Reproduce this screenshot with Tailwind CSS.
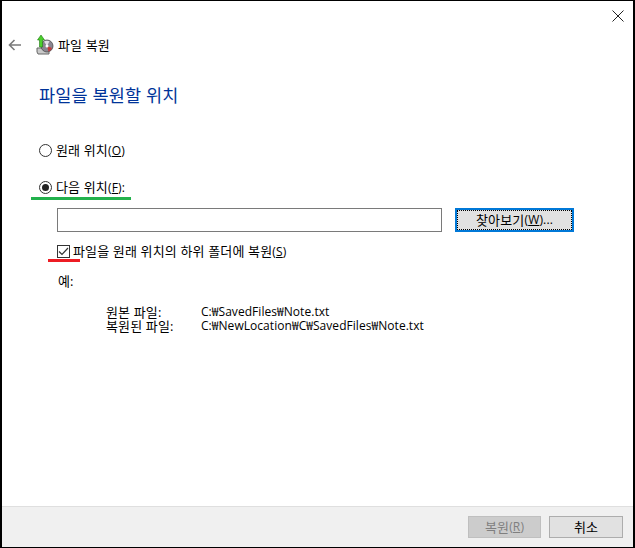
<!DOCTYPE html>
<html lang="ko">
<head>
    <meta charset="UTF-8">
    <title>파일 복원</title>
    <script src="https://cdn.jsdelivr.net/npm/@tailwindcss/browser@4"></script>
</head>
<body class="bg-white">
    <div class="relative w-[635px] h-[548px] flex flex-col border-t border-b border-l-2 border-r-2 border-t-black border-b-black border-l-black border-r-black bg-white text-[13px] leading-[14px] tracking-[0.15px] text-black font-['Open_Sans','Noto_Sans_CJK_KR',sans-serif] overflow-hidden">

        <!-- Close -->
        <div class="flex justify-end h-[29px] pt-[9px] pr-[9px]">
            <svg width="12" height="12" viewBox="0 0 12 12" fill="none" stroke="#222" stroke-width="1"><path d="M0.5 0.5 11.5 11.5M11.5 0.5 0.5 11.5"/></svg>
        </div>

        <!-- Title row -->
        <div class="flex items-center h-[30px] pl-[6px]">
            <svg width="14" height="12" viewBox="0 0 14 12" fill="none" stroke="#7a7a7a" stroke-width="1.6"><path d="M13 6H1.5M6.5 1 1.5 6l5 5"/></svg>
            <svg class="ml-[14px]" width="18" height="20" viewBox="0 0 18 20">
                <path d="M1 13h10l2 4v2H2l-1-2z" fill="#c9c9c9" stroke="#666" stroke-width="1"/>
                <circle cx="11" cy="11" r="6" fill="#8a8590" stroke="#4a4a4a" stroke-width="0.8"/>
                <path d="M11 11 8 6.5a6 6 0 0 1 5.5-.2z" fill="#e2dfe6"/>
                <path d="M11 11l5 2a6 6 0 0 1-3.4 3.8z" fill="#c23b3b"/>
                <circle cx="11" cy="11" r="1.5" fill="#fff"/>
                <path d="M5 0 1.5 5H3.5V12H6.5V5H8.5z" fill="#4ccf2c" stroke="#1d7a10" stroke-width="0.6"/>
            </svg>
            <span class="ml-[4px]">파일 복원</span>
        </div>

        <!-- Heading -->
        <h1 class="mt-[24px] ml-[37px] text-[17.5px] leading-[22px] font-normal text-[#003399]">파일을 복원할 위치</h1>

        <!-- Options -->
        <div class="mt-[36px] ml-[37px] flex items-center h-[16px]">
            <span class="w-[13px] h-[13px] rounded-full border border-[#333] bg-white"></span>
            <span class="ml-[4px]">원래 위치<span class="text-[12px]">(<u>O</u>)</span></span>
        </div>
        <div class="mt-[21px] ml-[37px] flex items-center h-[16px]">
            <span class="w-[13px] h-[13px] rounded-full border border-[#333] bg-white flex items-center justify-center">
                <span class="w-[7px] h-[7px] rounded-full bg-[#222]"></span>
            </span>
            <span class="ml-[4px]">다음 위치<span class="text-[12px]">(<u>F</u>):</span></span>
        </div>

        <!-- Path input + browse -->
        <div class="mt-[13px] ml-[55px] flex items-stretch h-[24px]">
            <div class="w-[385px] border border-[#7a7a7a] bg-white"></div>
            <div class="ml-[13px] w-[119px] border-[2px] border-[#0078d7] bg-[#e1e1e1]">
                <div class="h-full border border-dotted border-black flex items-center justify-center">찾아보기<span class="text-[12px]">(<u>W</u>)...</span></div>
            </div>
        </div>

        <!-- Subfolder checkbox -->
        <div class="mt-[11px] ml-[55px] flex items-center h-[16px]">
            <span class="w-[13px] h-[13px] border border-[#333] bg-white flex items-center justify-center">
                <svg width="11" height="9" viewBox="0 0 11 9" fill="none" stroke="#333" stroke-width="1.2"><path d="M1 4.5 4 7.5 10 1"/></svg>
            </span>
            <span class="ml-[3px]">파일을 원래 위치의 하위 폴더에 복원<span class="text-[12px]">(<u>S</u>)</span></span>
        </div>

        <!-- Example -->
        <div class="mt-[14px] ml-[56px] h-[16px] flex items-center">예:</div>
        <div class="mt-[16px] ml-[104px] grid grid-cols-[95px_1fr] leading-[14px]">
            <span>원본 파일:</span><span class="text-[12px] tracking-[0.05px]">C:₩SavedFiles₩Note.txt</span>
            <span>복원된 파일:</span><span class="text-[12px] tracking-[0.05px]">C:₩NewLocation₩C₩SavedFiles₩Note.txt</span>
        </div>

        <!-- Footer -->
        <div class="mt-auto h-[41px] bg-[#f0f0f0] border-t border-[#dfdfdf] flex justify-end gap-[8px] pt-[9px] pr-[10px]">
            <div class="w-[73px] h-[22px] bg-[#cccccc] border border-[#bfbfbf] text-[#7f7f7f] flex items-center justify-center">복원<span class="text-[12px]">(<u>R</u>)</span></div>
            <div class="w-[74px] h-[22px] bg-[#e1e1e1] border border-[#adadad] flex items-center justify-center">취소</div>
        </div>

        <!-- Annotation marks drawn over the dialog -->
        <div class="absolute left-[29px] top-[196px] w-[100px] h-[3px] bg-[#22b14c]"></div>
        <div class="absolute left-[46px] top-[258px] w-[32px] h-[3px] bg-[#ed1c24]"></div>
    </div>
</body>
</html>
